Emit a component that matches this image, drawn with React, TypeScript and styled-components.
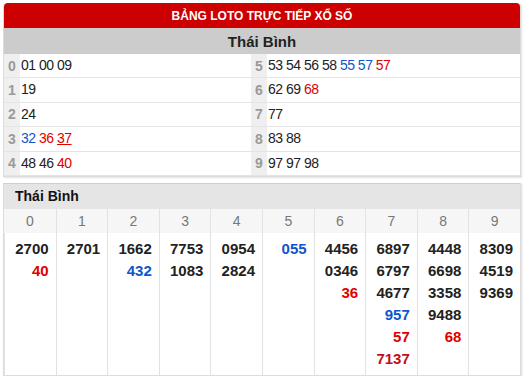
import React from "react";
import styled, { createGlobalStyle } from "styled-components";

const GlobalStyle = createGlobalStyle`
  body {
    margin: 0;
    background: #ffffff;
    font-family: "Liberation Sans", Arial, sans-serif;
  }
`;

const Page = styled.div`
  width: 525px;
  padding: 3px 4px 0 3px;
  box-sizing: border-box;
`;

const LotoBox = styled.div`
  border: 1px solid #dcdcdc;
  border-top: none;
  border-radius: 4px 4px 0 0;
  box-shadow: 1px 1px 2px rgba(0, 0, 0, 0.12);
`;

const RedTitle = styled.div`
  height: 25px;
  background: #cc0000;
  color: #ffffff;
  font-weight: bold;
  font-size: 12px;
  display: flex;
  align-items: center;
  justify-content: center;
  border-radius: 4px 4px 0 0;
`;

const ProvinceBar = styled.div`
  height: 26px;
  background: #cccccc;
  color: #222;
  font-weight: bold;
  font-size: 15px;
  display: flex;
  align-items: center;
  justify-content: center;
`;

const LotoGrid = styled.div`
  display: grid;
  grid-template-columns: 16px 231px 16px 1fr;
`;

const HeadCell = styled.div`
  height: 23.4px;
  background: #efefef;
  color: #9a9a9a;
  font-weight: bold;
  font-size: 14px;
  display: flex;
  align-items: center;
  justify-content: center;
  border-bottom: 1px solid #e4e4e4;
`;

const NumsCell = styled.div`
  height: 23.4px;
  line-height: 23.4px;
  padding-left: 1px;
  color: #222;
  font-size: 14px;
  letter-spacing: -0.5px;
  white-space: pre;
  border-bottom: 1px solid #e4e4e4;
`;

const Num = styled.span<{ $tone?: "blue" | "red"; $under?: boolean }>`
  color: ${(p) => (p.$tone === "blue" ? "#1155cc" : p.$tone === "red" ? "#e00000" : "inherit")};
  text-decoration: ${(p) => (p.$under ? "underline" : "none")};
`;

const ResultBox = styled.div`
  margin-top: 6px;
  border: 1px solid #dcdcdc;
  border-top: 1px solid #d6cfbf;
  box-shadow: 1px 1px 2px rgba(0, 0, 0, 0.15);
`;

const ResultTitle = styled.div`
  height: 25px;
  background: #e5e5e5;
  color: #111;
  font-weight: bold;
  font-size: 14px;
  display: flex;
  align-items: center;
  padding-left: 11px;
`;

const Cols = styled.div`
  display: grid;
  grid-template-columns: repeat(10, 1fr);
`;

const ColHead = styled.div`
  height: 24px;
  background: #f6f6f6;
  color: #777;
  font-size: 14px;
  display: flex;
  align-items: center;
  justify-content: center;
  border-left: 1px solid #e2e2e2;
  &:first-child {
    border-left: none;
  }
`;

const ColBody = styled.div`
  height: 137px;
  padding: 5px 7px 0 0;
  display: flex;
  flex-direction: column;
  align-items: flex-end;
  border-left: 1px solid #e2e2e2;
  &:first-child {
    border-left: none;
  }
`;

const Prize = styled.div<{ $tone?: "blue" | "red" | "dark" }>`
  line-height: 22px;
  font-size: 15px;
  font-weight: bold;
  color: ${(p) =>
    p.$tone === "blue" ? "#1155cc" : p.$tone === "red" ? "#e00000" : p.$tone === "dark" ? "#c0101a" : "#222"};
`;

type Tone = "blue" | "red" | undefined;
type N = { v: string; t?: Tone; u?: boolean };

const left: N[][] = [
  [{ v: "01" }, { v: "00" }, { v: "09" }],
  [{ v: "19" }],
  [{ v: "24" }],
  [{ v: "32", t: "blue" }, { v: "36", t: "red" }, { v: "37", t: "red", u: true }],
  [{ v: "48" }, { v: "46" }, { v: "40", t: "red" }],
];

const right: N[][] = [
  [{ v: "53" }, { v: "54" }, { v: "56" }, { v: "58" }, { v: "55", t: "blue" }, { v: "57", t: "blue" }, { v: "57", t: "red" }],
  [{ v: "62" }, { v: "69" }, { v: "68", t: "red" }],
  [{ v: "77" }],
  [{ v: "83" }, { v: "88" }],
  [{ v: "97" }, { v: "97" }, { v: "98" }],
];

type P = { v: string; t?: "blue" | "red" | "dark" };

const columns: P[][] = [
  [{ v: "2700" }, { v: "40", t: "red" }],
  [{ v: "2701" }],
  [{ v: "1662" }, { v: "432", t: "blue" }],
  [{ v: "7753" }, { v: "1083" }],
  [{ v: "0954" }, { v: "2824" }],
  [{ v: "055", t: "blue" }],
  [{ v: "4456" }, { v: "0346" }, { v: "36", t: "red" }],
  [{ v: "6897" }, { v: "6797" }, { v: "4677" }, { v: "957", t: "blue" }, { v: "57", t: "red" }, { v: "7137", t: "dark" }],
  [{ v: "4448" }, { v: "6698" }, { v: "3358" }, { v: "9488" }, { v: "68", t: "red" }],
  [{ v: "8309" }, { v: "4519" }, { v: "9369" }],
];

const renderNums = (row: N[]) =>
  row.map((n, i) => (
    <React.Fragment key={i}>
      {i > 0 ? " " : ""}
      <Num $tone={n.t} $under={n.u}>
        {n.v}
      </Num>
    </React.Fragment>
  ));

export default function App() {
  return (
    <Page>
      <GlobalStyle />
      <LotoBox>
        <RedTitle>BẢNG LOTO TRỰC TIẾP XỔ SỐ</RedTitle>
        <ProvinceBar>Thái Bình</ProvinceBar>
        <LotoGrid>
          {left.map((row, i) => (
            <React.Fragment key={i}>
              <HeadCell>{i}</HeadCell>
              <NumsCell>{renderNums(row)}</NumsCell>
              <HeadCell>{i + 5}</HeadCell>
              <NumsCell>{renderNums(right[i])}</NumsCell>
            </React.Fragment>
          ))}
        </LotoGrid>
      </LotoBox>
      <ResultBox>
        <ResultTitle>Thái Bình</ResultTitle>
        <Cols>
          {columns.map((_, i) => (
            <ColHead key={i}>{i}</ColHead>
          ))}
          {columns.map((col, i) => (
            <ColBody key={i}>
              {col.map((p, j) => (
                <Prize key={j} $tone={p.t}>
                  {p.v}
                </Prize>
              ))}
            </ColBody>
          ))}
        </Cols>
      </ResultBox>
    </Page>
  );
}
